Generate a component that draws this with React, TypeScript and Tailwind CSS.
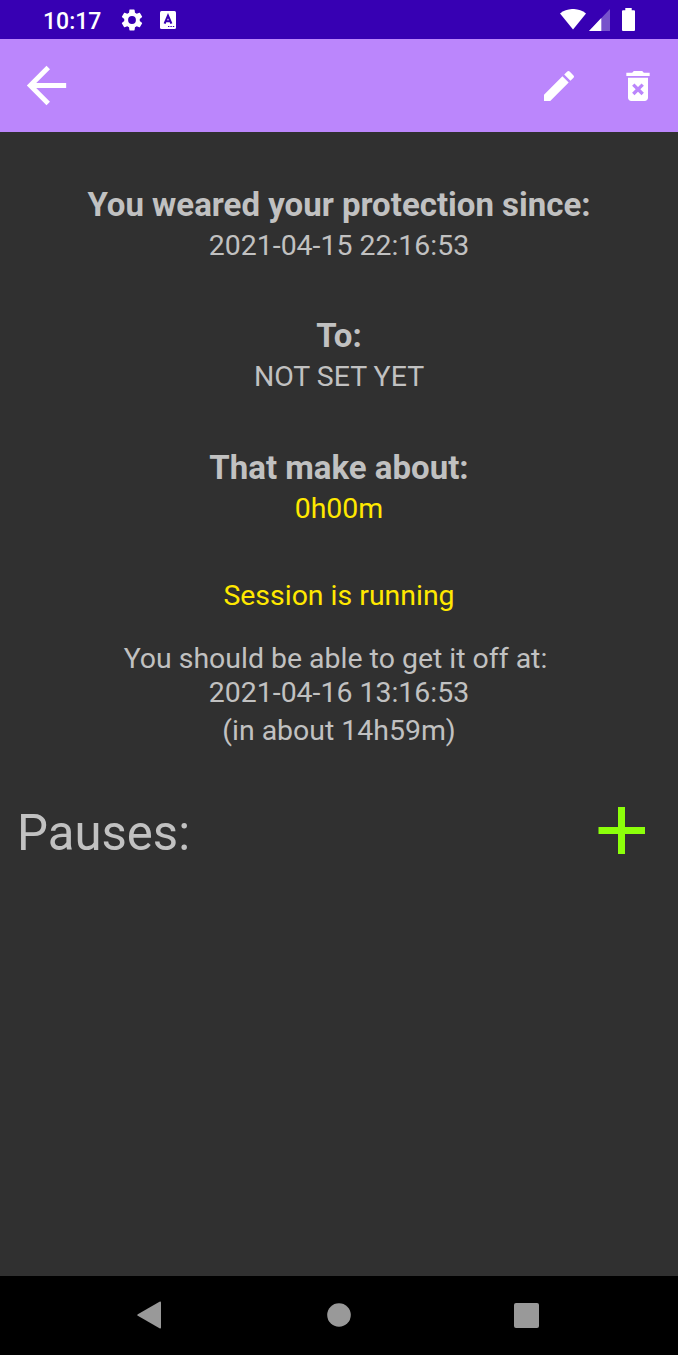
import React from "react";

type EntryProps = { title: string; value: string; highlight?: boolean };

function Entry({ title, value, highlight }: EntryProps) {
  return (
    <section className="flex flex-col items-center gap-1">
      <h2 className="h-[39px] text-[33px] leading-[39px] font-bold whitespace-pre">{title}</h2>
      <p className={`h-[34px] text-[28.450px] leading-[35px] whitespace-pre ${highlight ? "text-[#ffe800]" : ""}`}>{value}</p>
    </section>
  );
}

function StatusBar() {
  return (
    <header className="flex h-[39px] shrink-0 items-center bg-[#3700b3] pr-[43px] pl-[43px] text-white">
      <span className="pt-[3px] text-[23px] leading-[39px] font-medium">10:17</span>
      <svg className="ml-[17.500px] h-[26px] w-[26px]" viewBox="0 0 24 24" fill="currentColor">
        <path d="M19.14 12.94c.04-.3.06-.61.06-.94 0-.32-.02-.64-.07-.94l2.03-1.58a.49.49 0 0 0 .12-.61l-1.92-3.32a.488.488 0 0 0-.59-.22l-2.39.96c-.5-.38-1.03-.7-1.62-.94l-.36-2.54a.484.484 0 0 0-.48-.41h-3.84c-.24 0-.43.17-.47.41l-.36 2.54c-.59.24-1.13.57-1.62.94l-2.39-.96c-.22-.08-.47 0-.59.22L2.740 8.870c-.12.21-.08.47.12.61l2.030 1.580c-.05.3-.09.63-.09.94s.02.64.07.94l-2.030 1.580a.49.49 0 0 0-.12.61l1.920 3.320c.12.22.37.29.59.22l2.390-.96c.5.38 1.030.7 1.620.94l.36 2.540c.05.24.24.41.48.41h3.840c.24 0 .44-.17.47-.41l.36-2.540c.59-.24 1.130-.56 1.620-.94l2.390.96c.22.08.47 0 .59-.22l1.920-3.320c.12-.22.07-.47-.12-.61l-2.010-1.580zM12 15.600A3.600 3.600 0 1 1 12 8.400a3.600 3.600 0 0 1 0 7.200z" />
      </svg>
      <svg className="ml-[15.500px] h-[18px] w-4" viewBox="0 0 16 18">
        <rect width="16" height="18" rx="1.5" fill="white" />
        <path d="M4.600 12.700 8 4.700l3.400 8M5.800 10.200h4.400" fill="none" stroke="#3700b3" strokeWidth="2.1" />
        <path d="M8 15.500h1.400m1 0h1.400m1 0h1.400" stroke="#3700b3" strokeWidth="1.2" />
      </svg>
      <svg className="ml-auto h-[21px] w-[26px]" viewBox="0 0 26 21" fill="white">
        <path d="M0 4.400C7.500-1.500 18.500-1.500 26 4.400L13 20.500Z" />
      </svg>
      <svg className="ml-[3px] h-[22px] w-[21px]" viewBox="0 0 21 22" fill="white">
        <path d="M21 0v22H0z" opacity=".32" />
        <path d="M12.300 9v13H0z" />
      </svg>
      <svg className="ml-[12px] h-[23px] w-[13px]" viewBox="0 0 13 23" fill="white">
        <path d="M3.300 0h6.400v2.300H12a1 1 0 0 1 1 1V22a1 1 0 0 1-1 1H1a1 1 0 0 1-1-1V3.300a1 1 0 0 1 1-1h2.300z" />
      </svg>
    </header>
  );
}

function AppBar() {
  return (
    <nav className="flex h-[92.500px] shrink-0 items-center bg-[#bb86fc] pr-5 pl-[16.500px] text-white">
      <button aria-label="Back">
        <svg className="h-[59px] w-[59px]" viewBox="0 0 24 24" fill="currentColor">
          <path d="M20 11H7.830l5.590-5.590L12 4l-8 8 8 8 1.410-1.410L7.830 13H20v-2z" />
        </svg>
      </button>
      <button aria-label="Edit" className="ml-auto pt-px">
        <svg className="h-10 w-10" viewBox="0 0 24 24" fill="currentColor">
          <path d="M3 17.250V21h3.750L17.810 9.940l-3.750-3.750L3 17.250zM20.710 7.040a.996.996 0 0 0 0-1.410l-2.340-2.340a.996.996 0 0 0-1.410 0l-1.830 1.830 3.750 3.750 1.830-1.830z" />
        </svg>
      </button>
      <button aria-label="Delete" className="ml-[39px] pt-px">
        <svg className="h-10 w-10" viewBox="0 0 24 24" fill="currentColor">
          <path d="M6 19c0 1.100.9 2 2 2h8c1.100 0 2-.9 2-2V7H6v12zm2.460-7.120 1.410-1.410L12 12.590l2.120-2.120 1.410 1.410L13.410 14l2.120 2.120-1.410 1.410L12 15.410l-2.120 2.120-1.410-1.410L10.590 14l-2.130-2.120zM15.500 4l-1-1h-5l-1 1H5v2h14V4z" />
        </svg>
      </button>
    </nav>
  );
}

function NavigationBar() {
  return (
    <footer className="flex h-[79px] shrink-0 items-center justify-between bg-black pr-[139px] pb-px pl-[137px]">
      <svg className="h-7 w-6" viewBox="0 0 24 28" fill="#999999">
        <path d="M.8 13.200 22.500.7Q24 0 24 1.500v25Q24 28 22.500 27.300L.8 14.800Q-.3 14 .8 13.200Z" />
      </svg>
      <svg className="ml-[3px] h-6 w-6" viewBox="0 0 24 24" fill="#999999">
        <circle cx="12" cy="12" r="11.800" />
      </svg>
      <span className="h-[25px] w-[25px] rounded-xs bg-[#999999]" />
    </footer>
  );
}

export default function App() {
  return (
    <div className="flex h-[1355px] w-full flex-col bg-[#303030] font-['Roboto',sans-serif] text-[#c1c1c1]">
      <StatusBar />
      <AppBar />
      <main className="flex grow flex-col items-center pt-[53.500px]">
        <div className="flex flex-col items-center gap-[54.300px]">
          <Entry title="You weared your protection since:" value="2021-04-15 22:16:53" />
          <Entry title="To:" value="NOT SET YET" />
          <Entry title="That make about:" value="0h00m" highlight />
        </div>
        <p className="mt-[53px] h-[34px] text-[28.450px] leading-[35px] text-[#ffe800]">Session is running</p>
        <div className="mt-[30px] flex flex-col items-center text-[28.450px] leading-[34px]">
          <p className="whitespace-pre">{"You should be able to get it off at: "}</p>
          <p>2021-04-16 13:16:53</p>
          <p className="mt-1">(in about 14h59m)</p>
        </div>
        <div className="mt-[55px] flex w-full items-center justify-between pr-[33px] pl-[17px]">
          <h1 className="text-[49.100px] leading-[60px]">Pauses:</h1>
          <button aria-label="Add pause" className="pb-[5px]">
            <svg className="h-[47px] w-[47px]" viewBox="0 0 47 47">
              <path d="M.5 23.500H47M23.500 0v47" stroke="#8cff0a" strokeWidth="7" />
            </svg>
          </button>
        </div>
      </main>
      <NavigationBar />
    </div>
  );
}
